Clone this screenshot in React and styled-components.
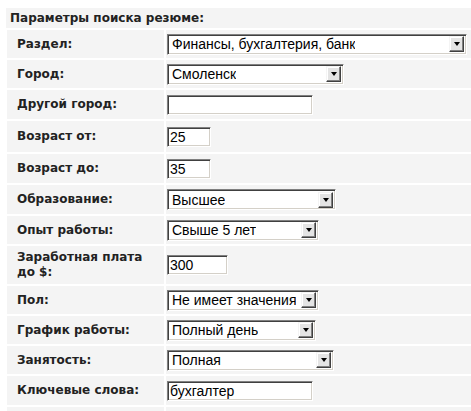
import React from "react";
import styled, { createGlobalStyle } from "styled-components";

const GlobalStyle = createGlobalStyle`
  html, body {
    margin: 0;
    padding: 0;
    background: #fff;
    overflow: hidden;
  }
`;

const Page = styled.div`
  padding: 8px 0 0 6px;
  width: 480px;
  font-family: "DejaVu Sans", Verdana, sans-serif;
`;

const Title = styled.div`
  background: #f4f4f4;
  height: 20px;
  line-height: 20px;
  padding-left: 4px;
  font-size: 12px;
  font-weight: bold;
  color: #222;
`;

const Form = styled.div`
  display: grid;
  grid-template-columns: 157px 1fr;
  gap: 2px;
  padding: 2px 0 0 1px;
`;

const Label = styled.div`
  background: #f4f4f4;
  height: ${(p) => p.$h}px;
  display: flex;
  align-items: center;
  padding-left: 10px;
  font-size: 12px;
  font-weight: bold;
  color: #222;
  line-height: 15px;
`;

const Cell = styled.div`
  background: #f4f4f4;
  height: ${(p) => p.$h}px;
  display: flex;
  align-items: center;
  padding-left: 1px;
`;

const Field = styled.div`
  box-sizing: border-box;
  width: ${(p) => p.$w}px;
  height: 20px;
  background: #fff;
  border-top: 1px solid #808080;
  border-left: 1px solid #808080;
  border-right: 1px solid #fff;
  border-bottom: 1px solid #fff;
  box-shadow: inset 1px 1px 0 #404040, inset -1px -1px 0 #d4d0c8;
  display: flex;
  align-items: center;
  font-family: "Liberation Sans", Arial, sans-serif;
  font-size: 14px;
  color: #000;
  padding-left: 2px;
  white-space: nowrap;
  overflow: hidden;
`;

const SelectBox = styled(Field)`
  height: 21px;
  padding-right: 2px;
  justify-content: space-between;
`;

const SelectText = styled.span`
  padding-left: 2px;
  overflow: hidden;
`;

const Arrow = styled.span`
  flex: none;
  box-sizing: border-box;
  width: 15px;
  height: 16px;
  background: #e4e4e4;
  border-top: 1px solid #f4f4f4;
  border-left: 1px solid #f4f4f4;
  border-right: 1px solid #404040;
  border-bottom: 1px solid #404040;
  box-shadow: inset -1px -1px 0 #808080, inset 1px 1px 0 #fff;
  display: flex;
  align-items: center;
  justify-content: center;

  &::after {
    content: "";
    border-left: 3.5px solid transparent;
    border-right: 3.5px solid transparent;
    border-top: 4px solid #000;
  }
`;

const Select = ({ w, children }) => (
  <SelectBox $w={w}>
    <SelectText>{children}</SelectText>
    <Arrow />
  </SelectBox>
);

const rows = [
  { label: "Раздел:", type: "select", w: 300, value: "Финансы, бухгалтерия, банк", h: 28 },
  { label: "Город:", type: "select", w: 177, value: "Смоленск", h: 28 },
  { label: "Другой город:", type: "input", w: 146, value: "", h: 29 },
  { label: "Возраст от:", type: "input", w: 44, value: "25", h: 31 },
  { label: "Возраст до:", type: "input", w: 44, value: "35", h: 29 },
  { label: "Образование:", type: "select", w: 169, value: "Высшее", h: 29 },
  { label: "Опыт работы:", type: "select", w: 152, value: "Свыше 5 лет", h: 28 },
  { label: ["Заработная плата", "до $:"], type: "input", w: 61, value: "300", h: 38 },
  { label: "Пол:", type: "select", w: 152, value: "Не имеет значения", h: 28 },
  { label: "График работы:", type: "select", w: 149, value: "Полный день", h: 28 },
  { label: "Занятость:", type: "select", w: 167, value: "Полная", h: 28 },
  { label: "Ключевые слова:", type: "input", w: 146, value: "бухгалтер", h: 29 },
  { label: "", type: "none", value: "", h: 28 },
];

export default function App() {
  return (
    <>
      <GlobalStyle />
      <Page>
        <Title>Параметры поиска резюме:</Title>
        <Form>
          {rows.map((r, i) => (
            <React.Fragment key={i}>
              <Label $h={r.h}>
                {Array.isArray(r.label) ? (
                  <span>
                    {r.label[0]}
                    <br />
                    {r.label[1]}
                  </span>
                ) : (
                  r.label
                )}
              </Label>
              <Cell $h={r.h}>
                {r.type === "select" && <Select w={r.w}>{r.value}</Select>}
                {r.type === "input" && <Field $w={r.w}>{r.value}</Field>}
              </Cell>
            </React.Fragment>
          ))}
        </Form>
      </Page>
    </>
  );
}
